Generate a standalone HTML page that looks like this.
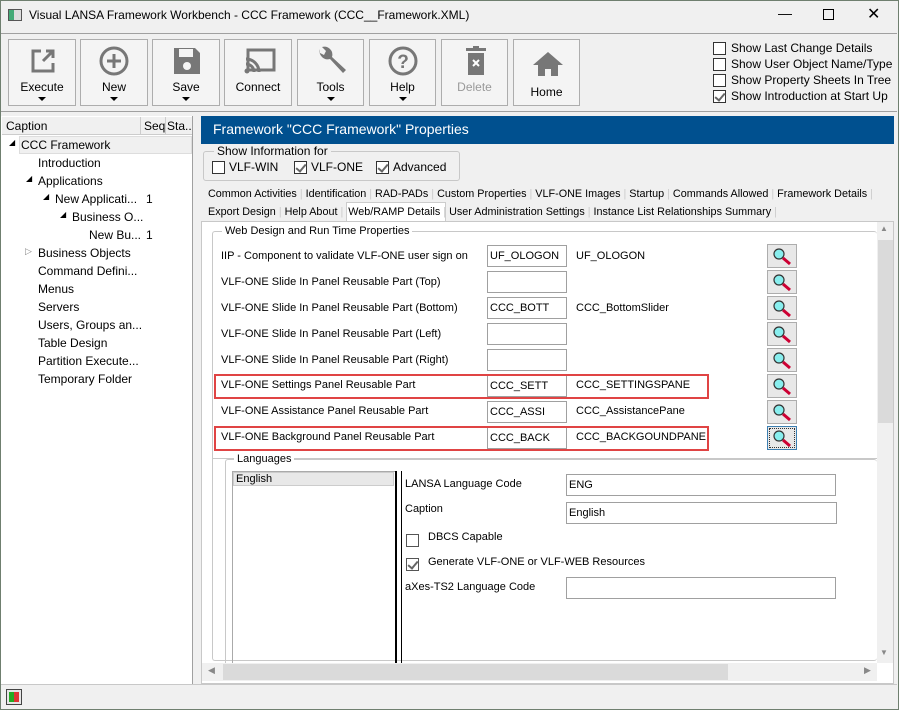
<!DOCTYPE html>
<html><head><style>
*{box-sizing:border-box;margin:0;padding:0}
body{width:899px;height:710px;background:#f0f0f0;font-family:"Liberation Sans",sans-serif;font-size:12px;color:#000;position:relative;overflow:hidden}
.a{position:absolute}
.win{left:0;top:0;width:899px;height:710px;border:1px solid #6f7f6f}
.btn{position:absolute;top:39px;height:67px;border:1px solid #adadad;background:#f4f4f4;text-align:center;font-size:12px}
.btn .l{position:absolute;left:0;right:0;top:40px}
.btn .ar{position:absolute;left:50%;top:57px;margin-left:-4px;border-left:4px solid transparent;border-right:4px solid transparent;border-top:4px solid #000}
.cb{position:absolute;width:13px;height:13px;border:1px solid #333;background:#fff}
.cb.k::after{content:"";position:absolute;left:3px;top:0px;width:4px;height:8px;border:solid #666;border-width:0 2px 2px 0;transform:rotate(40deg)}
.t{position:absolute;white-space:nowrap}
.c{font-size:11px}
.tb{position:absolute;height:22px;border:1px solid #a0a0a0;background:#fff;padding:4px 2px;white-space:nowrap;font-size:11px}
.lk{position:absolute;left:767px;width:30px;height:24px;border:1px solid #adadad;background:#e8e8e8}
.red{position:absolute;border:2px solid #e04444}
</style></head><body>
<div class="a win"></div>
<div class="a" style="left:8px;top:9px;width:14px;height:12px;border:1px solid #555;background:linear-gradient(90deg,#4a7 0 40%,#ddd 40%)"></div>
<div class="t" style="left:29px;top:8px;font-size:12px">Visual LANSA Framework Workbench - CCC Framework (CCC__Framework.XML)</div>
<div class="t" style="left:778px;top:5px;font-size:14px">—</div>
<div class="a" style="left:823px;top:9px;width:11px;height:11px;border:1px solid #000"></div>
<div class="t" style="left:867px;top:4px;font-size:16px">✕</div>
<div class="a" style="left:1px;top:33px;width:896px;height:1px;background:#a0a0a0"></div>
<div class="btn" style="left:8px;width:68px"><svg class="a" style="left:20px;top:7px" width="28" height="28" viewBox="0 0 28 28"><path d="M12 4H4v20h20v-8" fill="none" stroke="#777" stroke-width="3"/><path d="M14 14L24 4M17 4h7v7" fill="none" stroke="#777" stroke-width="3"/></svg><div class="l">Execute</div><div class="ar"></div></div>
<div class="btn" style="left:80px;width:68px"><svg class="a" style="left:18px;top:6px" width="30" height="30"><circle cx="15" cy="15" r="13" fill="none" stroke="#777" stroke-width="3"/><path d="M15 8v14M8 15h14" stroke="#777" stroke-width="3"/></svg><div class="l">New</div><div class="ar"></div></div>
<div class="btn" style="left:152px;width:68px"><svg class="a" style="left:19px;top:6px" width="30" height="30"><path d="M2 2h21l5 5v21H2z" fill="#777"/><rect x="7" y="3" width="14" height="8" fill="#f4f4f4"/><circle cx="15" cy="20" r="4" fill="#f4f4f4"/></svg><div class="l">Save</div><div class="ar"></div></div>
<div class="btn" style="left:224px;width:68px"><svg class="a" style="left:19px;top:8px" width="32" height="26"><rect x="4" y="2" width="26" height="20" fill="none" stroke="#777" stroke-width="3"/><path d="M2 11a13 13 0 0 1 13 13M2 16a8 8 0 0 1 8 8" fill="none" stroke="#777" stroke-width="3"/><circle cx="3" cy="23" r="2.5" fill="#777"/></svg><div class="l">Connect</div></div>
<div class="btn" style="left:297px;width:67px"><svg class="a" style="left:18px;top:5px" width="32" height="32"><path d="M4 4a8 8 0 0 0 10 10l13 14 3-3-14-13A8 8 0 0 0 6 2l4 4-2 4-4-2z" fill="#777"/></svg><div class="l">Tools</div><div class="ar"></div></div>
<div class="btn" style="left:369px;width:67px"><svg class="a" style="left:18px;top:6px" width="30" height="30"><circle cx="15" cy="15" r="13" fill="none" stroke="#777" stroke-width="3"/><text x="15" y="22" text-anchor="middle" font-size="19" font-weight="bold" fill="#777" font-family="Liberation Sans">?</text></svg><div class="l">Help</div><div class="ar"></div></div>
<div class="btn" style="left:441px;width:67px;color:#999"><svg class="a" style="left:23px;top:6px" width="22" height="30"><rect x="1" y="2" width="20" height="3" fill="#777"/><rect x="8" y="0" width="6" height="3" fill="#777"/><path d="M3 7h16v22H3z" fill="#777"/><path d="M8 14l6 6M14 14l-6 6" stroke="#fff" stroke-width="2"/></svg><div class="l">Delete</div></div>
<div class="btn" style="left:513px;width:67px"><svg class="a" style="left:18px;top:11px" width="32" height="26"><path d="M16 1L1 14h5v11h7v-7h6v7h7V14h5z" fill="#777"/></svg><div class="l" style="top:45px">Home</div></div>
<div class="cb" style="left:713px;top:42px"></div><div class="t" style="left:731px;top:41px">Show Last Change Details</div>
<div class="cb" style="left:713px;top:58px"></div><div class="t" style="left:731px;top:57px">Show User Object Name/Type</div>
<div class="cb" style="left:713px;top:74px"></div><div class="t" style="left:731px;top:73px">Show Property Sheets In Tree</div>
<div class="cb k" style="left:713px;top:90px"></div><div class="t" style="left:731px;top:89px">Show Introduction at Start Up</div>
<div class="a" style="left:1px;top:111px;width:896px;height:1px;background:#a0a0a0"></div>
<div class="a" style="left:1px;top:116px;width:192px;height:568px;background:#fff;border-right:1px solid #a0a0a0"></div>
<div class="a" style="left:2px;top:117px;width:190px;height:18px;background:#f0f0f0;border-bottom:1px solid #ccc"></div>
<div class="t" style="left:6px;top:119px">Caption</div>
<div class="a" style="left:140px;top:117px;width:1px;height:18px;background:#ccc"></div><div class="t" style="left:144px;top:119px">Seq</div>
<div class="a" style="left:165px;top:117px;width:1px;height:18px;background:#ccc"></div><div class="t" style="left:167px;top:119px">Sta..</div>
<div class="a" style="left:19px;top:136px;width:173px;height:18px;background:#f0f0f0;border:1px solid #ddd"></div>
<div class="t" style="left:9px;top:138px;font-size:8px">◢</div><div class="t" style="left:21px;top:138px">CCC Framework</div>
<div class="t" style="left:38px;top:156px">Introduction</div>
<div class="t" style="left:26px;top:174px;font-size:8px">◢</div><div class="t" style="left:38px;top:174px">Applications</div>
<div class="t" style="left:43px;top:192px;font-size:8px">◢</div><div class="t" style="left:55px;top:192px">New Applicati...</div><div class="t" style="left:146px;top:192px">1</div>
<div class="t" style="left:60px;top:210px;font-size:8px">◢</div><div class="t" style="left:72px;top:210px">Business O...</div>
<div class="t" style="left:89px;top:228px">New Bu...</div><div class="t" style="left:146px;top:228px">1</div>
<div class="t" style="left:25px;top:246px;font-size:9px;color:#888">▷</div><div class="t" style="left:38px;top:246px">Business Objects</div>
<div class="t" style="left:38px;top:264px">Command Defini...</div>
<div class="t" style="left:38px;top:282px">Menus</div>
<div class="t" style="left:38px;top:300px">Servers</div>
<div class="t" style="left:38px;top:318px">Users, Groups an...</div>
<div class="t" style="left:38px;top:336px">Table Design</div>
<div class="t" style="left:38px;top:354px">Partition Execute...</div>
<div class="t" style="left:38px;top:372px">Temporary Folder</div>
<div class="a" style="left:201px;top:116px;width:693px;height:28px;background:#00508f"></div>
<div class="t" style="left:213px;top:121px;color:#fff;font-size:14px">Framework "CCC Framework" Properties</div>
<div class="a" style="left:203px;top:151px;width:257px;height:30px;border:1px solid #c8c8c8;border-radius:3px"></div>
<div class="t" style="left:214px;top:144px;background:#f0f0f0;padding:0 3px">Show Information for</div>
<div class="cb" style="left:212px;top:161px"></div><div class="t" style="left:229px;top:160px">VLF-WIN</div>
<div class="cb k" style="left:294px;top:161px"></div><div class="t" style="left:311px;top:160px">VLF-ONE</div>
<div class="cb k" style="left:376px;top:161px"></div><div class="t" style="left:393px;top:160px">Advanced</div>
<div class="t" style="left:208px;top:188px;font-size:10.8px">Common Activities <span style="color:#ccc">|</span> Identification <span style="color:#ccc">|</span> RAD-PADs <span style="color:#ccc">|</span> Custom Properties <span style="color:#ccc">|</span> VLF-ONE Images <span style="color:#ccc">|</span> Startup <span style="color:#ccc">|</span> Commands Allowed <span style="color:#ccc">|</span> Framework Details <span style="color:#ccc">|</span></div>
<div class="a" style="left:346px;top:202px;width:100px;height:20px;background:#fff;border:1px solid #ccc;border-bottom:none"></div>
<div class="t" style="left:208px;top:206px;font-size:10.8px">Export Design <span style="color:#ccc">|</span> Help About <span style="color:#ccc">|</span> <span style="margin-left:2px">Web/RAMP Details</span> <span style="color:#ccc">|</span> User Administration Settings <span style="color:#ccc">|</span> Instance List Relationships Summary <span style="color:#ccc">|</span></div>
<div class="a" style="left:201px;top:221px;width:693px;height:463px;background:#fff;border:1px solid #c8c8c8"></div>
<div class="a" style="left:212px;top:231px;width:665px;height:430px;border:1px solid #c8c8c8;border-radius:3px;border-right:none"></div>
<div class="t c" style="left:222px;top:225px;background:#fff;padding:0 3px">Web Design and Run Time Properties</div>
<div class="a" style="left:212px;top:458px;width:665px;height:1px;background:#c8c8c8"></div>
<div class="t c" style="left:221px;top:250px">IIP - Component to validate VLF-ONE user sign on</div>
<div class="t c" style="left:221px;top:276px">VLF-ONE Slide In Panel Reusable Part (Top)</div>
<div class="t c" style="left:221px;top:302px">VLF-ONE Slide In Panel Reusable Part (Bottom)</div>
<div class="t c" style="left:221px;top:328px">VLF-ONE Slide In Panel Reusable Part (Left)</div>
<div class="t c" style="left:221px;top:354px">VLF-ONE Slide In Panel Reusable Part (Right)</div>
<div class="t c" style="left:221px;top:379px">VLF-ONE Settings Panel Reusable Part</div>
<div class="t c" style="left:221px;top:405px">VLF-ONE Assistance Panel Reusable Part</div>
<div class="t c" style="left:221px;top:431px">VLF-ONE Background Panel Reusable Part</div>
<div class="tb" style="left:487px;top:245px;width:80px">UF_OLOGON</div><div class="t c" style="left:576px;top:250px">UF_OLOGON</div>
<div class="tb" style="left:487px;top:271px;width:80px"></div>
<div class="tb" style="left:487px;top:297px;width:80px">CCC_BOTT</div><div class="t c" style="left:576px;top:302px">CCC_BottomSlider</div>
<div class="tb" style="left:487px;top:323px;width:80px"></div>
<div class="tb" style="left:487px;top:349px;width:80px"></div>
<div class="tb" style="left:487px;top:375px;width:80px">CCC_SETT</div><div class="t c" style="left:576px;top:379px">CCC_SETTINGSPANE</div>
<div class="tb" style="left:487px;top:401px;width:80px">CCC_ASSI</div><div class="t c" style="left:576px;top:405px">CCC_AssistancePane</div>
<div class="tb" style="left:487px;top:427px;width:80px">CCC_BACK</div><div class="t c" style="left:576px;top:431px">CCC_BACKGOUNDPANE</div>
<div class="red" style="left:214px;top:374px;width:495px;height:25px"></div>
<div class="red" style="left:214px;top:426px;width:495px;height:25px"></div>
<svg width="0" height="0" style="position:absolute"><defs><g id="mg"><circle cx="11" cy="9" r="5" fill="#8ee" stroke="#333" stroke-width="1.2"/><path d="M15 13l7 6" stroke="#c03" stroke-width="3"/></g></defs></svg>
<div class="lk" style="top:244px"><svg width="28" height="22"><use href="#mg"/></svg></div>
<div class="lk" style="top:270px"><svg width="28" height="22"><use href="#mg"/></svg></div>
<div class="lk" style="top:296px"><svg width="28" height="22"><use href="#mg"/></svg></div>
<div class="lk" style="top:322px"><svg width="28" height="22"><use href="#mg"/></svg></div>
<div class="lk" style="top:348px"><svg width="28" height="22"><use href="#mg"/></svg></div>
<div class="lk" style="top:374px"><svg width="28" height="22"><use href="#mg"/></svg></div>
<div class="lk" style="top:400px"><svg width="28" height="22"><use href="#mg"/></svg></div>
<div class="lk" style="top:426px;border-color:#3c7fb1;outline:1px dotted #333;outline-offset:-3px"><svg width="28" height="22"><use href="#mg"/></svg></div>
<div class="a" style="left:225px;top:459px;width:652px;height:210px;border:1px solid #c8c8c8;border-radius:3px;border-right:none;border-bottom:none"></div>
<div class="t c" style="left:234px;top:453px;background:#fff;padding:0 3px">Languages</div>
<div class="a" style="left:232px;top:471px;width:164px;height:192px;border:1px solid #aaa;border-bottom:none"></div>
<div class="a" style="left:233px;top:472px;width:161px;height:14px;background:#e8e8e8;border:1px solid #ccc"></div>
<div class="t c" style="left:236px;top:473px">English</div>
<div class="a" style="left:395px;top:471px;width:2px;height:192px;background:#000"></div>
<div class="a" style="left:401px;top:471px;width:1px;height:192px;background:#000"></div>
<div class="t c" style="left:405px;top:478px">LANSA Language Code</div>
<div class="tb" style="left:566px;top:474px;width:270px">ENG</div>
<div class="t c" style="left:405px;top:503px">Caption</div>
<div class="tb" style="left:566px;top:502px;width:271px">English</div>
<div class="cb" style="left:406px;top:534px;border-color:#555"></div><div class="t c" style="left:428px;top:531px">DBCS Capable</div>
<div class="cb k" style="left:406px;top:558px;border-color:#555"></div><div class="t c" style="left:428px;top:556px">Generate VLF-ONE or VLF-WEB Resources</div>
<div class="t c" style="left:405px;top:581px">aXes-TS2 Language Code</div>
<div class="tb" style="left:566px;top:577px;width:270px"></div>
<div class="a" style="left:877px;top:222px;width:16px;height:441px;background:#f0f0f0"></div>
<div class="a" style="left:878px;top:240px;width:15px;height:183px;background:#dadada"></div>
<div class="t" style="left:880px;top:224px;font-size:8px;color:#888">▲</div>
<div class="t" style="left:880px;top:648px;font-size:8px;color:#888">▼</div>
<div class="a" style="left:202px;top:663px;width:675px;height:18px;background:#f0f0f0"></div>
<div class="a" style="left:223px;top:664px;width:505px;height:16px;background:#dadada"></div>
<div class="t" style="left:208px;top:665px;font-size:9px;color:#888">◀</div>
<div class="t" style="left:864px;top:665px;font-size:9px;color:#888">▶</div>
<div class="a" style="left:1px;top:684px;width:896px;height:1px;background:#c8c8c8"></div>
<div class="a" style="left:6px;top:689px;width:16px;height:16px;border:1px solid #444;background:#e6e6e6"></div>
<div class="a" style="left:9px;top:692px;width:10px;height:10px;background:linear-gradient(90deg,#2a2 50%,#d33 50%)"></div>
</body></html>
